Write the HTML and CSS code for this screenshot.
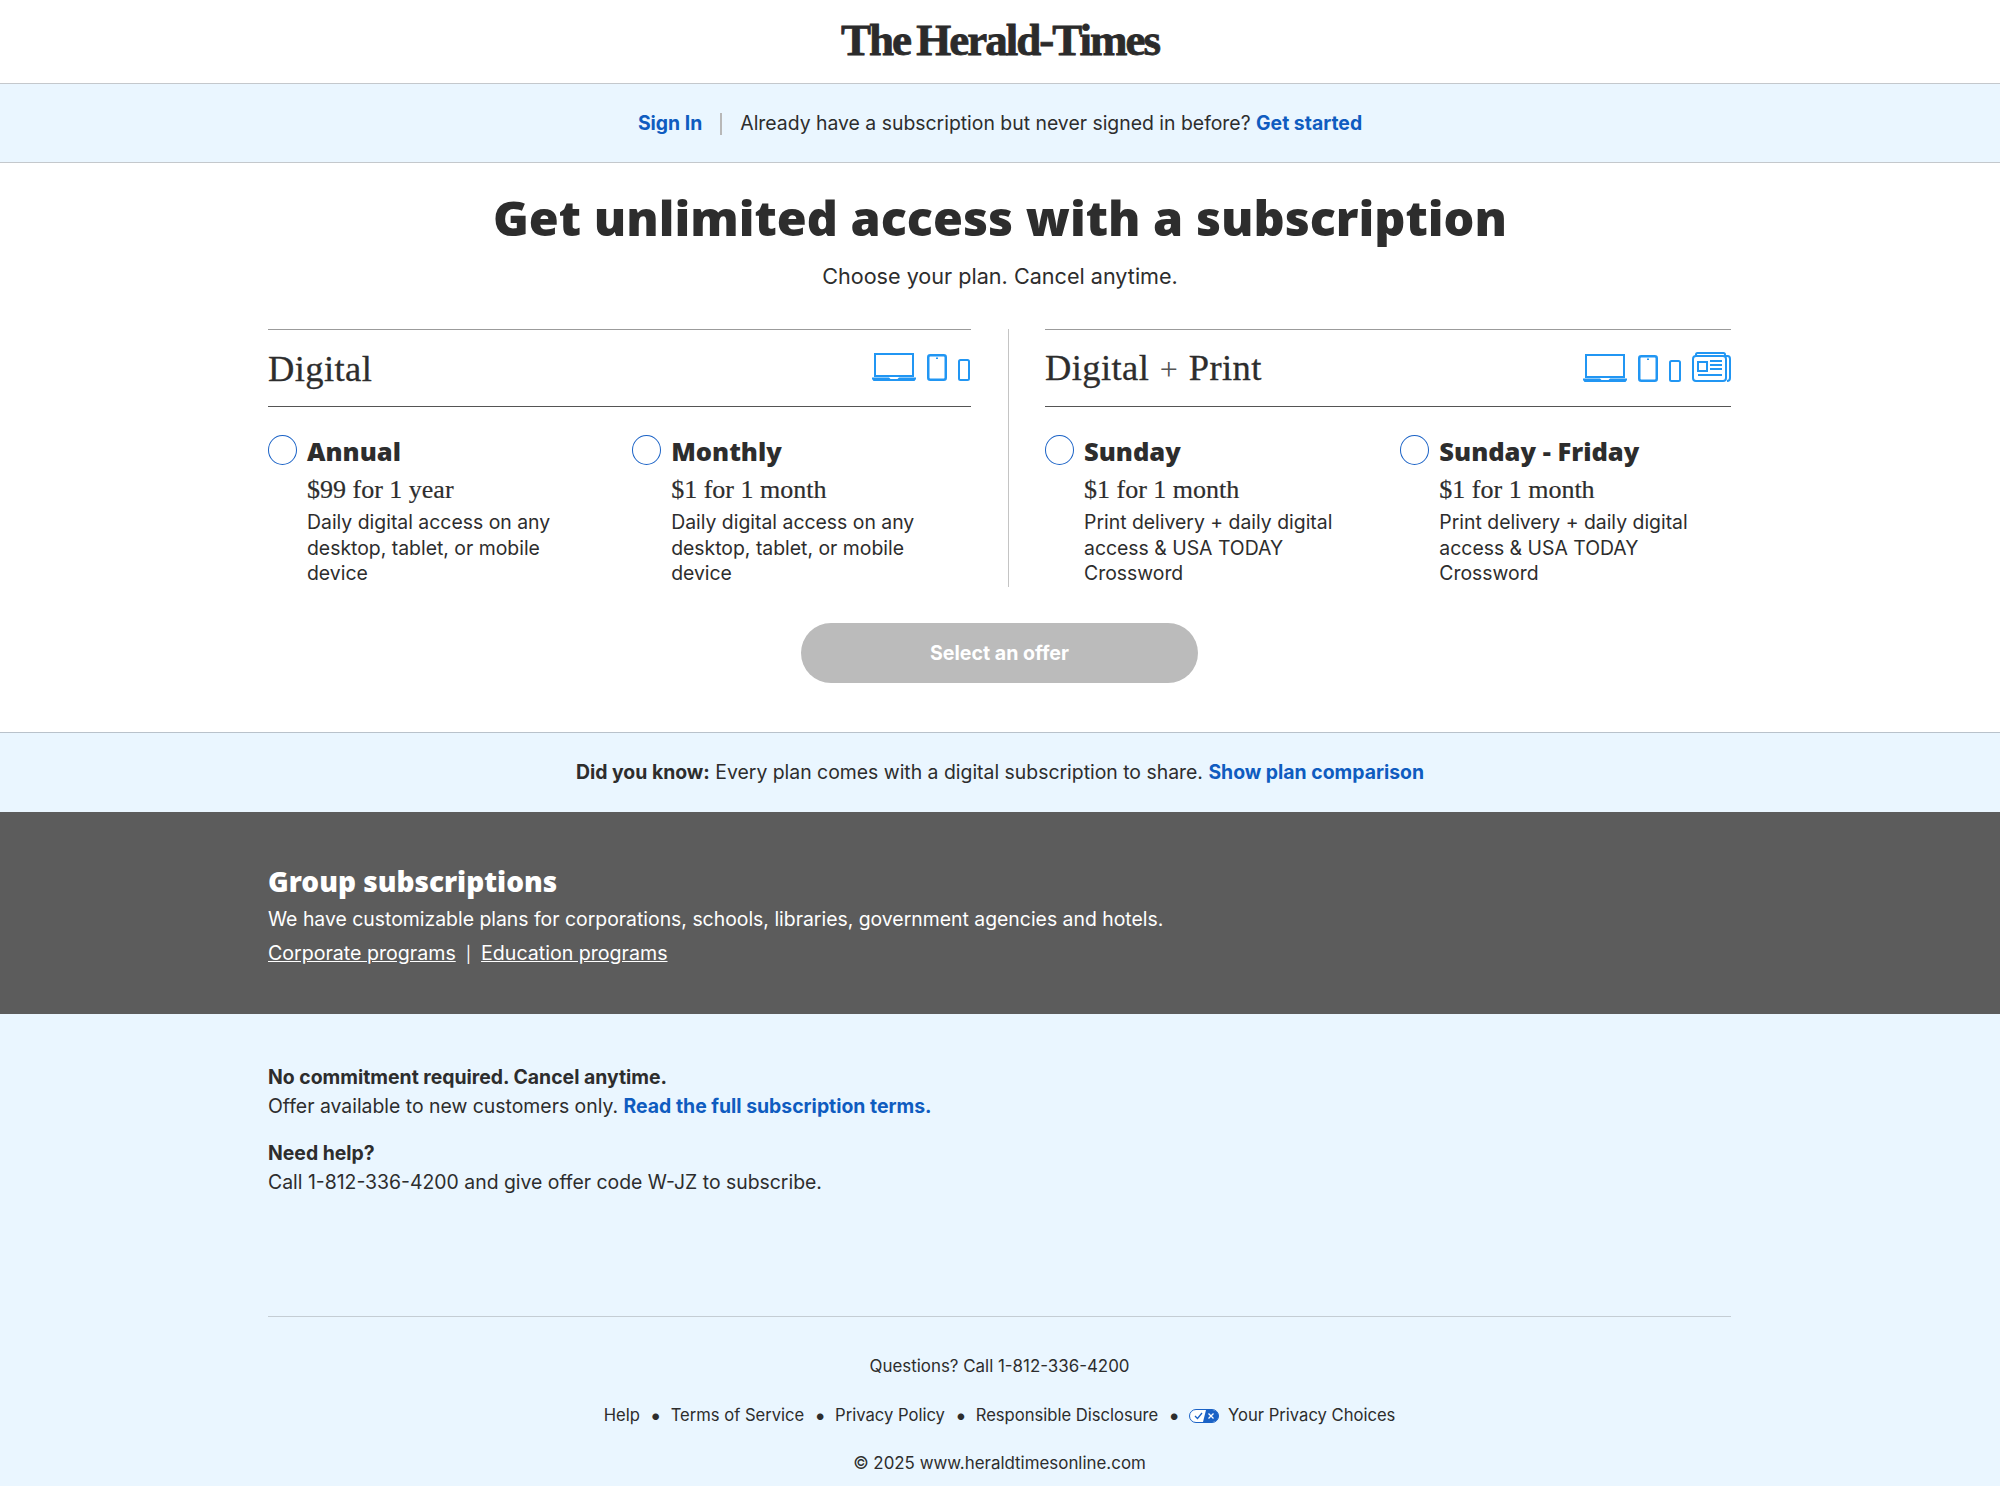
FILE: index.html
```html
<!DOCTYPE html>
<html lang="en">
<head>
    <meta charset="UTF-8">
    <meta name="viewport" content="width=device-width, initial-scale=1">
    <title>The Herald-Times - Subscribe</title>
    <link rel="stylesheet" href="styles.css">
</head>
<body>

    <!-- Logo -->
    <header class="masthead">
        <div class="logo">The Herald-Times</div>
    </header>

    <!-- Sign in bar -->
    <div class="signin-bar">
        <a href="#" class="link">Sign In</a>
        <span class="pipe"></span>
        <span>Already have a subscription but never signed in before? <a href="#" class="link">Get started</a></span>
    </div>

    <!-- Offers -->
    <main class="offers">
        <h1>Get unlimited access with a subscription</h1>
        <p class="subhead">Choose your plan. Cancel anytime.</p>

        <div class="groups">
            <section class="group group-digital">
                <div class="group-head">
                    <h2>Digital</h2>
                    <div class="devices">
                        <svg width="44" height="28" viewBox="0 0 44 28"><path d="M3 1h38v22H3z" fill="none" stroke="#2196f3" stroke-width="2"/><path d="M0 24.500h17l1.500 1.500h7l1.500-1.500h17v1.500l-1.500 2H1.500L0 26z" fill="#2196f3"/></svg>
                        <svg width="20" height="27" viewBox="0 0 20 27"><rect x="1.250" y="1.250" width="17.500" height="24.500" rx="2" fill="none" stroke="#2196f3" stroke-width="2.500"/><rect x="9" y="3.500" width="2" height="1.500" fill="#2196f3"/></svg>
                        <svg width="12" height="22" viewBox="0 0 12 22"><rect x="1" y="1" width="10" height="20" rx="1.500" fill="none" stroke="#2196f3" stroke-width="2"/></svg>
                    </div>
                </div>
                <div class="plans">
                    <label class="plan">
                        <span class="radio"></span>
                        <div>
                            <h3>Annual</h3>
                            <p class="price">$99 for 1 year</p>
                            <p class="desc">Daily digital access on any<br>desktop, tablet, or mobile<br>device</p>
                        </div>
                    </label>
                    <label class="plan">
                        <span class="radio"></span>
                        <div>
                            <h3>Monthly</h3>
                            <p class="price">$1 for 1 month</p>
                            <p class="desc">Daily digital access on any<br>desktop, tablet, or mobile<br>device</p>
                        </div>
                    </label>
                </div>
            </section>

            <section class="group group-print">
                <div class="group-head">
                    <h2>Digital <span class="plus">+</span> Print</h2>
                    <div class="devices">
                        <svg width="44" height="28" viewBox="0 0 44 28"><path d="M3 1h38v22H3z" fill="none" stroke="#2196f3" stroke-width="2"/><path d="M0 24.500h17l1.500 1.500h7l1.500-1.500h17v1.500l-1.500 2H1.500L0 26z" fill="#2196f3"/></svg>
                        <svg width="20" height="27" viewBox="0 0 20 27"><rect x="1.250" y="1.250" width="17.500" height="24.500" rx="2" fill="none" stroke="#2196f3" stroke-width="2.500"/><rect x="9" y="3.500" width="2" height="1.500" fill="#2196f3"/></svg>
                        <svg width="12" height="22" viewBox="0 0 12 22"><rect x="1" y="1" width="10" height="20" rx="1.500" fill="none" stroke="#2196f3" stroke-width="2"/></svg>
                        <svg width="39" height="30" viewBox="0 0 39 30"><g fill="none" stroke="#2196f3" stroke-width="2"><path d="M4 4V2.500Q4 1 5.500 1h26Q33 1 33 2.500V4"/><path d="M34 4h1.500q2.500 0 2.500 3v19q0 3-3 3"/><rect x="1" y="4" width="33" height="25" rx="3"/><rect x="6" y="10" width="9" height="9"/><path d="M18 9h12M18 13h12M18 17h12M6 23h24"/></g></svg>
                    </div>
                </div>
                <div class="plans">
                    <label class="plan">
                        <span class="radio"></span>
                        <div>
                            <h3>Sunday</h3>
                            <p class="price">$1 for 1 month</p>
                            <p class="desc">Print delivery + daily digital<br>access &amp; USA TODAY<br>Crossword</p>
                        </div>
                    </label>
                    <label class="plan">
                        <span class="radio"></span>
                        <div>
                            <h3>Sunday - Friday</h3>
                            <p class="price">$1 for 1 month</p>
                            <p class="desc">Print delivery + daily digital<br>access &amp; USA TODAY<br>Crossword</p>
                        </div>
                    </label>
                </div>
            </section>
        </div>

        <button class="select-btn" disabled>Select an offer</button>
    </main>

    <!-- Did you know -->
    <div class="know-bar">
        <b>Did you know:</b> Every plan comes with a digital subscription to share. <a href="#" class="link">Show plan comparison</a>
    </div>

    <!-- Group subscriptions -->
    <section class="corporate">
        <div class="wrap">
            <h2>Group subscriptions</h2>
            <p class="corporate-text">We have customizable plans for corporations, schools, libraries, government agencies and hotels.</p>
            <p class="corporate-links"><a href="#">Corporate programs</a><span class="bar">|</span><a href="#">Education programs</a></p>
        </div>
    </section>

    <!-- Terms and footer -->
    <div class="lower">
        <div class="wrap">
            <div class="terms">
                <p><b>No commitment required. Cancel anytime.</b></p>
                <p>Offer available to new customers only. <a href="#" class="link">Read the full subscription terms.</a></p>
            </div>
            <div class="terms help">
                <p><b>Need help?</b></p>
                <p>Call 1-812-336-4200 and give offer code W-JZ to subscribe.</p>
            </div>

            <footer>
                <p>Questions? Call 1-812-336-4200</p>
                <ul>
                    <li><a href="#">Help</a></li>
                    <li><a href="#">Terms of Service</a></li>
                    <li><a href="#">Privacy Policy</a></li>
                    <li><a href="#">Responsible Disclosure</a></li>
                    <li class="choices">
                        <svg width="30" height="14" viewBox="0 0 30 14"><rect x="0.500" y="0.500" width="29" height="13" rx="6.500" fill="#fff" stroke="#1a62c6"/><path d="M17 1h6.500a6 6 0 0 1 0 12H14z" fill="#1a62c6"/><path d="M6 7l2.500 2.500L13 4" fill="none" stroke="#1a62c6" stroke-width="1.300"/><path d="M19.500 4.500l5 5M24.500 4.500l-5 5" stroke="#fff" stroke-width="1.300"/></svg>
                        <a href="#">Your Privacy Choices</a>
                    </li>
                </ul>
                <p>&copy; 2025 www.heraldtimesonline.com</p>
            </footer>
        </div>
    </div>

</body>
</html>
```

FILE: styles.css
```css
/* General Styles */
body {
    margin: 0;
    font-family: Inter, Arial, sans-serif;
    font-size: 19.400px;
    line-height: 25px;
    color: #2d2d2d;
    background: #fff;
}

h1, h2, h3, p {
    margin: 0;
}

.link {
    color: #0f5cc0;
    font-weight: 700;
    text-decoration: none;
}

.wrap {
    width: 1463px;
    margin: 0 269px 0 268px;
}

/* Logo */
.masthead {
    height: 83px;
    border-bottom: 1px solid #c4c8cc;
    display: flex;
    align-items: center;
    justify-content: center;
}

.logo {
    margin-top: -2px;
    font-family: "Liberation Serif", serif;
    font-size: 45px;
    font-weight: 700;
    letter-spacing: -2px;
    word-spacing: -3px;
    color: #2b2b2b;
    -webkit-text-stroke: 0.8px #2b2b2b;
}

/* Sign in bar */
.signin-bar {
    height: 77px;
    padding-top: 1px;
    background: #eaf6ff;
    border-bottom: 1px solid #c4c8cc;
    display: flex;
    align-items: center;
    justify-content: center;
    gap: 18px;
}

.pipe {
    width: 2px;
    height: 22px;
    background: #b8b8b8;
}

/* Offers */
.offers {
    height: 569px;
    border-bottom: 1px solid #b9c2cb;
    text-align: center;
}

.offers h1 {
    padding-top: 24px;
    font-family: "Noto Sans", Arial, sans-serif;
    font-size: 48.500px;
    line-height: 60px;
    font-weight: 900;
}

.subhead {
    margin-top: 16px;
    font-size: 21.600px;
    line-height: 26px;
}

.groups {
    width: 1463px;
    margin: 40px 269px 0 268px;
    display: flex;
    text-align: left;
}

.group {
    box-sizing: border-box;
}

.group-digital {
    width: 741px;
    padding-right: 37px;
    border-right: 1px solid #c4c4c4;
}

.group-print {
    flex: 1;
    padding-left: 36px;
}

.group-head {
    height: 76px;
    border-top: 1px solid #9b9b9b;
    border-bottom: 1px solid #555;
    display: flex;
    align-items: center;
    justify-content: space-between;
}

.group-head h2 {
    padding-top: 1px;
    font-family: "Liberation Serif", serif;
    font-size: 36.500px;
    line-height: 40px;
    font-weight: 400;
    letter-spacing: 0.4px;
    -webkit-text-stroke: 0.3px #2d2d2d;
}

.plus {
    margin: 0 1px;
    font-size: 32px;
    color: #555;
    -webkit-text-stroke: 0;
}

.devices {
    display: flex;
    align-items: flex-end;
    gap: 11px;
    padding-bottom: 3px;
}

.group-digital .devices {
    padding-right: 1px;
}

.plans {
    display: grid;
    grid-template-columns: 51.800% 1fr;
    padding-top: 28px;
}

.plan {
    display: flex;
    gap: 10px;
}

.radio {
    flex: none;
    width: 27px;
    height: 28px;
    border: 1px solid #1a62c6;
    border-radius: 50%;
    background: #fff;
}

.plan h3 {
    font-family: "Noto Sans", Arial, sans-serif;
    font-size: 25.500px;
    line-height: 32px;
    font-weight: 900;
}

.price {
    margin-top: 7px;
    font-family: "Liberation Serif", serif;
    font-size: 26px;
    line-height: 32px;
    -webkit-text-stroke: 0.2px #2d2d2d;
}

.desc {
    margin-top: 4px;
    line-height: 25.500px;
}

.select-btn {
    display: block;
    width: 397px;
    height: 60px;
    margin: 36.500px 802px 0 801px;
    border: none;
    border-radius: 30px;
    background: #bbb;
    color: #fff;
    font-family: Inter, Arial, sans-serif;
    font-size: 19.600px;
    font-weight: 700;
}

/* Did you know */
.know-bar {
    height: 79px;
    background: #eaf6ff;
    display: flex;
    align-items: center;
    justify-content: center;
    white-space: pre-wrap;
}

/* Group subscriptions */
.corporate {
    height: 202px;
    background: #5c5c5c;
    color: #fff;
}

.corporate h2 {
    padding-top: 51px;
    font-family: "Noto Sans", Arial, sans-serif;
    font-size: 28px;
    line-height: 36px;
    font-weight: 900;
}

.corporate-text {
    margin-top: 8px;
}

.corporate-links {
    margin-top: 9px;
    font-size: 19.600px;
}

.corporate-links a {
    color: #fff;
}

.bar {
    margin: 0 10px;
    font-size: 16px;
}

/* Terms and footer */
.lower {
    height: 472px;
    background: #eaf6ff;
}

.lower .wrap {
    padding-top: 51px;
}

.terms p + p {
    margin-top: 4px;
}

.help {
    margin-top: 22px;
}

footer {
    margin-top: 121px;
    padding-top: 37px;
    border-top: 1px solid #c4cdd4;
    text-align: center;
    font-size: 16.900px;
}

footer ul {
    list-style: none;
    margin: 24px 0 23px;
    padding: 0;
    font-size: 16.600px;
    display: flex;
    justify-content: center;
}

footer li {
    display: flex;
    align-items: center;
    gap: 9px;
}

footer li + li::before {
    content: "\2022";
    font-size: 21px;
}

footer li + li {
    margin-left: 10px;
}

footer a {
    color: #2d2d2d;
    text-decoration: none;
}
```
